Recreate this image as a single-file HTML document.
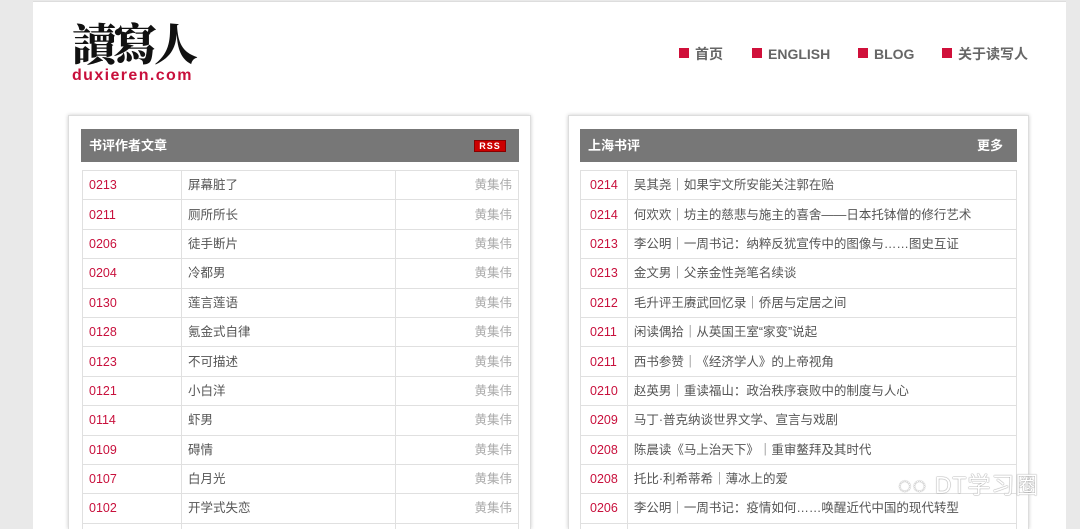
<!DOCTYPE html>
<html style="width:1080px;height:529px;overflow:hidden"><head><meta charset="utf-8"><style>
*{margin:0;padding:0;box-sizing:border-box}
body{width:1080px;height:529px;overflow:hidden;background:#e9e9e9;font-family:"Liberation Sans","Noto Sans CJK SC",sans-serif;position:relative}
.page{position:absolute;left:33px;top:1px;width:1033px;height:528px;background:#fff;border-top:1px solid #ddd}
.logo{position:absolute;left:72px;top:14px;font-family:"Noto Serif CJK SC","Liberation Serif",serif;font-size:44px;font-weight:900;color:#111;letter-spacing:-3px;line-height:54px}
.dom{position:absolute;left:72px;top:67px;font-size:16px;font-weight:bold;color:#c8103c;letter-spacing:1.4px}
.nav{position:absolute;top:45px;font-size:14px;font-weight:bold;color:#666;line-height:18px}
.nav i{position:absolute;left:-16px;top:3px;width:10px;height:10px;background:#d0103a}
.box{position:absolute;top:115px;width:463px;height:414px;border:1px solid #ddd;border-bottom:none;box-shadow:0 0 4px rgba(0,0,0,.2);background:#fff;overflow:hidden}
.hd{position:absolute;top:13px;height:33px;background:#777;color:#fff;font-size:13px;font-weight:bold;line-height:33px;padding-left:8px}
table{position:absolute;top:54px;border-collapse:collapse;font-size:12.5px;font-family:"Liberation Sans","Noto Sans CJK SC",sans-serif}
td{border:1px solid #e0e0e0;height:29.4px;padding:0 6px;color:#555;white-space:nowrap;line-height:14px}
td.d{color:#c8103c}
td.a{color:#aaa;text-align:right}
.rss{position:absolute;right:13px;top:11px;width:32px;height:12px;background:#c00;border:1px solid #800;color:#fff;font-size:9px;line-height:10px;text-align:center;letter-spacing:1px}
.wm{position:absolute;left:898px;top:466px;font-size:23px;color:#fff;text-shadow:0 0 1px #888,0 0 1px #888;letter-spacing:1px}
</style></head><body>
<div class="page"></div>
<div class="logo">讀寫人</div>
<div class="dom">duxieren.com</div>
<div class="nav" style="left:695px"><i></i>首页</div>
<div class="nav" style="left:768px"><i></i>ENGLISH</div>
<div class="nav" style="left:874px"><i></i>BLOG</div>
<div class="nav" style="left:958px"><i></i>关于读写人</div>

<div class="box" style="left:68px">
<div class="hd" style="left:12px;width:438px">书评作者文章<span class="rss">RSS</span></div>
<table style="left:13px;width:437px">
<tr><td class="d" style="width:99px">0213</td><td style="width:214px">屏幕脏了</td><td class="a">黄集伟</td></tr>
<tr><td class="d">0211</td><td>厕所所长</td><td class="a">黄集伟</td></tr>
<tr><td class="d">0206</td><td>徒手断片</td><td class="a">黄集伟</td></tr>
<tr><td class="d">0204</td><td>冷都男</td><td class="a">黄集伟</td></tr>
<tr><td class="d">0130</td><td>莲言莲语</td><td class="a">黄集伟</td></tr>
<tr><td class="d">0128</td><td>氪金式自律</td><td class="a">黄集伟</td></tr>
<tr><td class="d">0123</td><td>不可描述</td><td class="a">黄集伟</td></tr>
<tr><td class="d">0121</td><td>小白洋</td><td class="a">黄集伟</td></tr>
<tr><td class="d">0114</td><td>虾男</td><td class="a">黄集伟</td></tr>
<tr><td class="d">0109</td><td>碍情</td><td class="a">黄集伟</td></tr>
<tr><td class="d">0107</td><td>白月光</td><td class="a">黄集伟</td></tr>
<tr><td class="d">0102</td><td>开学式失恋</td><td class="a">黄集伟</td></tr>
<tr><td class="d">&nbsp;</td><td></td><td class="a"></td></tr>
</table>
</div>

<div class="box" style="left:568px;width:461px">
<div class="hd" style="left:11px;width:437px">上海书评<span style="position:absolute;right:14px">更多</span></div>
<table style="left:11px;width:437px">
<tr><td class="d" style="width:45px;padding:0 9px">0214</td><td>吴其尧｜如果宇文所安能关注郭在贻</td></tr>
<tr><td class="d" style="padding:0 9px">0214</td><td>何欢欢｜坊主的慈悲与施主的喜舍——日本托钵僧的修行艺术</td></tr>
<tr><td class="d" style="padding:0 9px">0213</td><td>李公明｜一周书记：纳粹反犹宣传中的图像与……图史互证</td></tr>
<tr><td class="d" style="padding:0 9px">0213</td><td>金文男｜父亲金性尧笔名续谈</td></tr>
<tr><td class="d" style="padding:0 9px">0212</td><td>毛升评王赓武回忆录｜侨居与定居之间</td></tr>
<tr><td class="d" style="padding:0 9px">0211</td><td>闲读偶拾｜从英国王室“家变”说起</td></tr>
<tr><td class="d" style="padding:0 9px">0211</td><td>西书参赞｜《经济学人》的上帝视角</td></tr>
<tr><td class="d" style="padding:0 9px">0210</td><td>赵英男｜重读福山：政治秩序衰败中的制度与人心</td></tr>
<tr><td class="d" style="padding:0 9px">0209</td><td>马丁·普克纳谈世界文学、宣言与戏剧</td></tr>
<tr><td class="d" style="padding:0 9px">0208</td><td>陈晨读《马上治天下》｜重审鳌拜及其时代</td></tr>
<tr><td class="d" style="padding:0 9px">0208</td><td>托比·利希蒂希｜薄冰上的爱</td></tr>
<tr><td class="d" style="padding:0 9px">0206</td><td>李公明｜一周书记：疫情如何……唤醒近代中国的现代转型</td></tr>
<tr><td class="d" style="padding:0 9px">&nbsp;</td><td></td></tr>
</table>
</div>
<div class="wm">◌◌ DT学习圈</div>
</body></html>
